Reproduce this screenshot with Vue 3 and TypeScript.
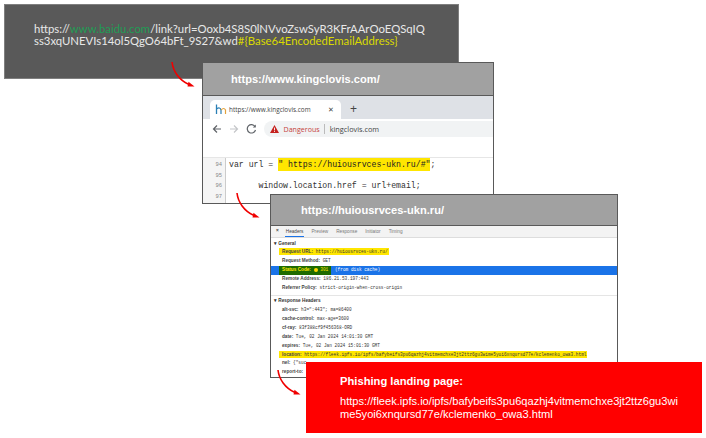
<script setup lang="ts">
interface Row { k: string; v: string; mark?: boolean }
const general: Row[] = [
  { k: 'Request Method:', v: 'GET' },
]
const general2: Row[] = [
  { k: 'Remote Address:', v: '186.21.53.197:443' },
  { k: 'Referrer Policy:', v: 'strict-origin-when-cross-origin' },
]
const response: Row[] = [
  { k: 'alt-svc:', v: 'h3=":443"; ma=86400' },
  { k: 'cache-control:', v: 'max-age=3600' },
  { k: 'cf-ray:', v: '83f388cf9f456368-ORD' },
  { k: 'date:', v: 'Tue, 02 Jan 2024 14:01:30 GMT' },
  { k: 'expires:', v: 'Tue, 02 Jan 2024 15:01:30 GMT' },
  { k: 'location:', v: 'https://fleek.ipfs.io/ipfs/bafybeifs3pu6qazhj4vitmemchxe3jt2ttz6gu3wime5yoi6xnqursd77e/kclemenko_owa3.html', mark: true },
  { k: 'nel:', v: '{"suc' },
  { k: 'report-to:', v: '' },
]
const tabs = ['Headers', 'Preview', 'Response', 'Initiator', 'Timing']
</script>

<template>
  <div class="canvas">
    <section class="card dark">
      <p class="link">https://<span class="green">www.baidu.com</span>/link?url=Ooxb4S8S0lNVvoZswSyR3KFrAArOoEQSqIQ<br />ss3xqUNEVIs14ol5QgO64bFt_9S27&amp;wd<span class="yellow">#{Base64EncodedEmailAddress}</span></p>
    </section>

    <svg class="arrow a1" width="26" height="28" viewBox="0 0 26 28">
      <path d="M1 1 C2 10 8 19 18 23.5" fill="none" stroke="#f00000" stroke-width="1.6" />
      <path d="M23.5 25.5 L17.5 20.8 L16.5 25.5 Z" fill="#f00000" />
    </svg>

    <section class="card site">
      <header class="head"><h2>https://www.kingclovis.com/</h2></header>
      <div class="chrome">
        <div class="tabbar">
          <div class="tab">
            <svg class="fav" width="13" height="11" viewBox="0 0 13 11">
              <path d="M1.5 0.5 V10" stroke="#2a7fb5" stroke-width="1.3" fill="none" />
              <path d="M1.5 5 Q5 2.5 6 6 V10" stroke="#2a7fb5" stroke-width="1.2" fill="none" />
              <path d="M6 6 Q9 3 10.5 6 V10" stroke="#e2a23c" stroke-width="1.2" fill="none" />
            </svg>
            <span class="tabtitle">https://www.kingclovis.com</span>
            <span class="close">✕</span>
          </div>
          <span class="plus">+</span>
        </div>
        <div class="toolbar">
          <svg class="navs" width="46" height="12" viewBox="0 0 46 12">
            <path d="M9 6 H1.5 M5 2.5 L1.5 6 L5 9.5" stroke="#5f6368" stroke-width="1.2" fill="none" />
            <path d="M18 6 H25.5 M22 2.5 L25.5 6 L22 9.5" stroke="#c4c6c9" stroke-width="1.2" fill="none" />
            <path d="M43 3.5 A4.2 4.2 0 1 0 43.5 7" stroke="#5f6368" stroke-width="1.2" fill="none" />
            <path d="M43.8 1.5 V4.5 H40.8 Z" fill="#5f6368" />
          </svg>
          <div class="omni">
            <svg width="9" height="8" viewBox="0 0 9 8"><path d="M4.5 0 L9 8 H0 Z" fill="#c5221f" /><rect x="4.1" y="2.6" width="0.9" height="2.8" fill="#fff" /><rect x="4.1" y="6" width="0.9" height="0.9" fill="#fff" /></svg>
            <span class="danger">Dangerous</span>
            <i class="sep"></i>
            <span class="domain">kingclovis.com</span>
          </div>
        </div>
        <div class="code">
          <div class="gutter"><span>94</span><span>95</span><span>96</span><span>97</span></div>
          <pre class="src"><span>var url = <mark>" https://huiousrvces-ukn.ru/#"</mark>;</span>
<span> </span>
<span>      window.location.href = url+email;</span></pre>
        </div>
      </div>
    </section>

    <svg class="arrow a2" width="26" height="28" viewBox="0 0 26 28">
      <path d="M1 1 C2 10 8 19 18 23.5" fill="none" stroke="#f00000" stroke-width="1.6" />
      <path d="M23.5 25.5 L17.5 20.8 L16.5 25.5 Z" fill="#f00000" />
    </svg>

    <section class="card net">
      <header class="head"><h2>https://huiousrvces-ukn.ru/</h2></header>
      <div class="devtools">
        <div class="dtabs">
          <span class="x">×</span>
          <span v-for="(t, i) in tabs" :key="t" class="dtab" :class="{ on: i === 0 }">{{ t }}</span>
        </div>
        <div class="group">
          <div class="title">▾ General</div>
          <div class="row"><mark class="hl"><b>Request URL:</b> https://huiousrvces-ukn.ru/</mark></div>
          <div v-for="r in general" :key="r.k" class="row"><b>{{ r.k }}</b> {{ r.v }}</div>
          <div class="row sel"><span class="status"><b>Status Code:</b> <i class="dot"></i> 301</span> (from disk cache)</div>
          <div v-for="r in general2" :key="r.k" class="row"><b>{{ r.k }}</b> {{ r.v }}</div>
        </div>
        <div class="group second">
          <div class="title">▾ Response Headers</div>
          <div v-for="r in response" :key="r.k" class="row">
            <mark v-if="r.mark" class="hl"><b>{{ r.k }}</b> {{ r.v }}</mark>
            <template v-else><b>{{ r.k }}</b> {{ r.v }}</template>
          </div>
        </div>
      </div>
    </section>

    <svg class="arrow a3" width="26" height="28" viewBox="0 0 26 28">
      <path d="M1 1 C2 10 8 19 18 23.5" fill="none" stroke="#f00000" stroke-width="1.6" />
      <path d="M23.5 25.5 L17.5 20.8 L16.5 25.5 Z" fill="#f00000" />
    </svg>

    <section class="card phish">
      <h3>Phishing landing page:</h3>
      <p>https://fleek.ipfs.io/ipfs/bafybeifs3pu6qazhj4vitmemchxe3jt2ttz6gu3wi<br />me5yoi6xnqursd77e/kclemenko_owa3.html</p>
    </section>
  </div>
</template>

<style>
html, body { margin: 0; background: #fff; }
</style>

<style scoped>
.canvas {
  position: relative;
  width: 706px;
  height: 438px;
  overflow: hidden;
  background: #fff;
  font-family: "Liberation Sans", Arial, sans-serif;
}
.card { position: absolute; box-sizing: border-box; margin: 0; }
.arrow { position: absolute; }
.a1 { left: 171px; top: 61px; }
.a2 { left: 236px; top: 192px; }
.a3 { left: 277px; top: 369px; }

.dark {
  left: 4px; top: 4px; width: 455px; height: 75px;
  background: #595959;
  border: 1px solid #7f7f7f;
  padding: 18px 0 0 29px;
}
.link {
  margin: 0;
  font: 11.35px/12px Lato, sans-serif;
  color: #e8e8e8;
  white-space: nowrap;
}
.green { color: #1f9d55; }
.yellow { color: #d9d900; }

.head {
  display: flex;
  align-items: center;
  background: #a1a1a1;
  border-bottom: 1px solid #595959;
}
.head h2 {
  margin: 0;
  color: #fff;
  font-size: 11.1px;
  font-weight: 700;
}

.site {
  left: 202px; top: 62px; width: 292px; height: 142px;
  border: 1px solid #595959;
  background: #fff;
  overflow: hidden;
}
.site .head { height: 32px; padding-left: 28px; }
.chrome { display: flex; flex-direction: column; }
.tabbar {
  display: flex; align-items: flex-end;
  height: 23px;
  background: #dee1e6;
  padding-left: 7px;
}
.tab {
  display: flex; align-items: center; gap: 1px;
  width: 131px; height: 19px;
  box-sizing: border-box;
  padding: 0 7px 0 5px;
  background: #fff;
  border-radius: 5px 5px 0 0;
}
.tabtitle { font: 6.4px "Open Sans", sans-serif; color: #444; flex: 1; white-space: nowrap; }
.close { font-size: 7px; color: #444; }
.plus { font-size: 12px; line-height: 19px; color: #444; margin-left: 9px; }
.toolbar {
  display: flex; align-items: center; gap: 6px;
  height: 20px;
  padding-left: 9px;
}
.omni {
  flex: 1;
  display: flex; align-items: center; gap: 4.5px;
  height: 16px;
  background: #f1f3f4;
  border-radius: 8px 0 0 8px;
  padding-left: 6px;
  font: 7.1px "Open Sans", sans-serif;
}
.danger { color: #c5443c; }
.sep { width: 1px; height: 10px; background: #bbb; }
.domain { color: #444; font-size: 7.3px; }
.code {
  display: flex;
  margin-top: 18px;
  border-top: 1px solid #e6e6e6;
  height: 45px;
}
.gutter {
  width: 23px;
  box-sizing: border-box;
  background: #f5f5f5;
  border-right: 1px solid #ccc;
  padding: 2px 3px 0 0;
  display: flex; flex-direction: column; align-items: flex-end;
  font: 5.5px/10.7px "Liberation Mono", monospace;
  color: #888;
}
.src {
  margin: 0;
  padding: 2px 0 0 3px;
  font: 8.2px/10.7px "Liberation Mono", monospace;
  color: #333;
}
.src mark { background: #ffe600; color: #222; padding: 2px 0; }

.net {
  left: 270px; top: 194px; width: 348px; height: 184px;
  border: 1px solid #595959;
  background: #fff;
  overflow: hidden;
}
.net .head { height: 30px; padding-left: 30px; }
.devtools { font: 4.7px/8.85px "Liberation Sans", sans-serif; color: #333; }
.dtabs {
  display: flex; align-items: center; gap: 6px;
  height: 11px;
  padding: 0 0 0 5px;
  background: #f3f3f3;
  border-bottom: 1px solid #ddd;
  color: #777;
}
.x { color: #444; font-weight: 700; }
.dtab { height: 11px; line-height: 11px; padding: 0 1px; }
.dtab.on { color: #444; box-shadow: inset 0 -1px 0 #1a73e8; }
.group { padding-top: 1.5px; }
.second { border-top: 1px solid #e5e5e5; margin-top: 2px; padding-top: 1px; }
.title { font-weight: 700; padding-left: 3px; height: 8.85px; }
.second .title { margin-bottom: 1px; }
.row {
  padding-left: 11px;
  height: 8.85px;
  white-space: nowrap;
  font-family: "Liberation Mono", monospace;
  font-size: 4.45px;
}
.row b { font-family: "Liberation Sans", sans-serif; font-size: 4.7px; color: #444; }
.hl { background: #ffe600; color: #333; margin-left: -3px; padding: 1px 1px 1px 3px; }
.sel { background: #1a73e8; color: #fff; padding-left: 8px; }
.status { display: inline-block; background: #1e6b00; color: #ffe600; padding: 0 3px; margin-right: 1px; }
.status b { color: #ffe600; }
.dot { display: inline-block; width: 4px; height: 4px; border-radius: 50%; background: #ffd600; vertical-align: -0.5px; }

.phish {
  left: 306px; top: 362px; width: 396px; height: 71px;
  background: #ff0000;
  color: #fff;
  padding: 13px 0 0 34px;
}
.phish h3 { margin: 0 0 7px; font-size: 11.2px; line-height: 13px; font-weight: 700; }
.phish p { margin: 0; font-size: 11.1px; line-height: 13px; white-space: nowrap; }
</style>
